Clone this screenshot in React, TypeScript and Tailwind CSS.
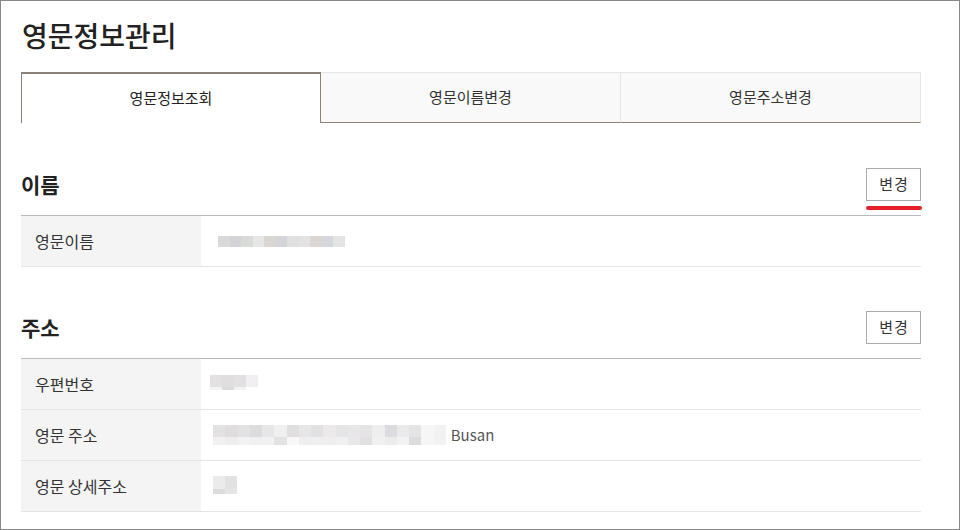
import React from "react";

const FONT = { fontFamily: '"Noto Sans CJK KR", "Noto Sans", sans-serif' };

// 모자이크 처리된 값 (개인정보 가림)
type MosaicRow = { h: number; cells: string[] };

const Mosaic = ({ rows, cell = 12 }: { rows: MosaicRow[]; cell?: number }) => (
  <div className="flex flex-col">
    {rows.map((r, i) => (
      <div key={i} className="flex">
        {r.cells.map((c, j) => (
          <div key={j} style={{ width: cell, height: r.h, background: c }} />
        ))}
      </div>
    ))}
  </div>
);

const tabs = ["영문정보조회", "영문이름변경", "영문주소변경"];

const SectionHead = ({ title, mark, className = "mt-[45px]" }: { title: string; mark?: boolean; className?: string }) => (
  <div className={`flex items-center justify-between mb-[14px] ${className}`}>
    <h2 className="text-[21px] font-bold text-[#222] leading-none">{title}</h2>
    <div className="relative">
      <button className="w-[55px] h-[33px] border border-[#aaa] bg-white text-[15px] text-[#333] tracking-[1px] pl-[1px]">
        변경
      </button>
      {mark && (
        <div className="absolute left-0 top-[38px] w-[56px] h-[4px] rounded-full bg-[#e8202a]" />
      )}
    </div>
  </div>
);

const Row = ({ label, children }: { label: string; children: React.ReactNode }) => (
  <div className="flex h-[51px] border-b border-[#e5e5e5]">
    <div className="w-[180px] bg-[#f4f4f4] flex items-center pl-[14px] text-[16px] text-[#333]">
      {label}
    </div>
    <div className="flex-1 flex items-center">{children}</div>
  </div>
);

export default function App() {
  return (
    <div style={FONT} className="w-[960px] h-[530px] border border-[#888] bg-white overflow-hidden">
      <div className="w-[900px] ml-[20px]">
        <h1 className="text-[28px] font-medium text-[#222] leading-none pt-[20px] pl-[1px]">
          영문정보관리
        </h1>

        {/* 탭 */}
        <div className="flex mt-[23px] h-[51px]">
          {tabs.map((t, i) =>
            i === 0 ? (
              <div
                key={t}
                className="w-[300px] bg-white border-t-2 border-x border-[#8b8178] flex items-center justify-center text-[15px] text-[#222]"
              >
                {t}
              </div>
            ) : (
              <div
                key={t}
                className="w-[300px] bg-[#f9f9f9] border-t border-r border-[#e5e5e5] border-b border-b-[#8b8178] flex items-center justify-center text-[15px] text-[#333]"
              >
                {t}
              </div>
            )
          )}
        </div>

        {/* 이름 */}
        <SectionHead title="이름" mark />
        <div className="border-t border-[#bbb]">
          <Row label="영문이름">
            <div className="pl-[17px]">
              <Mosaic
                cell={11.5}
                rows={[
                  {
                    h: 11,
                    cells: [
                      "#d9d9d9", "#d3d3d8", "#d9dbd9", "#e6e6e6", "#dad6d4", "#d4d4da",
                      "#e0e0e0", "#e3e3e3", "#dbd6d4", "#d6d6de", "#e4e4e4",
                    ],
                  },
                ]}
              />
            </div>
          </Row>
        </div>

        {/* 주소 */}
        <SectionHead title="주소" className="mt-[44px]" />
        <div className="border-t border-[#bbb]">
          <Row label="우편번호">
            <div className="pl-[9px] -mt-[3px]">
              <Mosaic
                rows={[
                  { h: 12, cells: ["#e3e1e1", "#e0dede", "#e2e0e0", "#f0f0f2"] },
                  { h: 3, cells: ["#f4f4f4", "#dcdcdc", "#f2f2f2", "#ffffff"] },
                ]}
              />
            </div>
          </Row>
          <Row label="영문 주소">
            <div className="pl-[12px] flex items-center gap-[5px]">
              <Mosaic
                cell={12.25}
                rows={[
                  {
                    h: 12,
                    cells: [
                      "#e3e1e1", "#dfdddd", "#e2e2e4", "#dcdcdc", "#e7e7e9", "#f0f0f0",
                      "#e0dede", "#e6e6e8", "#e1e1e1", "#ebe9e9", "#e5e5e7", "#e8e6e6",
                      "#e4e4e6", "#eeeeee", "#dcdce0", "#eaeaea", "#e4e4e6", "#f6f6f6",
                      "#f2f2f2",
                    ],
                  },
                  {
                    h: 8,
                    cells: [
                      "#f1f1f1", "#efeeee", "#f2f2f2", "#f0f0f0", "#f1f1f1", "#e3e3e5",
                      "#f8f8f8", "#eeeeee", "#efefef", "#eeeeee", "#f0f0f0", "#e8e8e8",
                      "#e0e0e0", "#f0f0f0", "#ececec", "#f2f2f2", "#dcdcdc", "#f6f6f6",
                      "#f2f2f2",
                    ],
                  },
                ]}
              />
              <span className="text-[15px] text-[#555]">Busan</span>
            </div>
          </Row>
          <Row label="영문 상세주소">
            <div className="pl-[12px] -mt-[2px]">
              <Mosaic
                cell={12}
                rows={[
                  { h: 13, cells: ["#ebebeb", "#e2e2e2"] },
                  { h: 5, cells: ["#dedcdc", "#e6e6e6"] },
                ]}
              />
            </div>
          </Row>
        </div>
      </div>
    </div>
  );
}
